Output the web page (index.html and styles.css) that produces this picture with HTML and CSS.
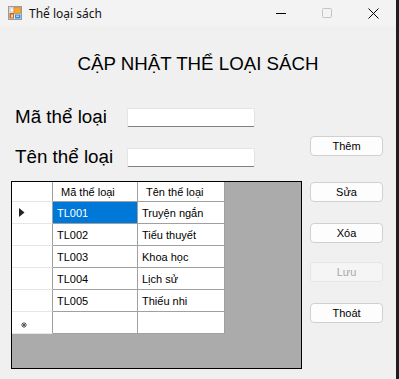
FILE: index.html
```html
<!DOCTYPE html>
<html lang="vi">
<head>
    <meta charset="UTF-8">
    <title>Thể loại sách</title>
    <link rel="stylesheet" href="styles.css">
</head>
<body>
<div class="screen">
    <div class="window">
        <!-- title bar -->
        <div class="titlebar">
            <svg class="app-icon" width="14" height="14" viewBox="0 0 14 14">
                <rect x="0.5" y="0.5" width="13" height="13" fill="#e8e8e8" stroke="#9a9a9a"/>
                <rect x="2" y="2" width="4" height="4" fill="#f7f7f7" stroke="#b0b0b0" stroke-width="0.6"/>
                <rect x="6" y="1.5" width="6.5" height="6" fill="#f5a733" stroke="#c97a14" stroke-width="0.6"/>
                <rect x="1.5" y="7" width="4.5" height="5.5" fill="#c8641c"/>
                <rect x="3" y="8.5" width="2" height="3" fill="#f8d9a8"/>
                <rect x="7" y="8.5" width="5.5" height="4" fill="#2e8de0"/>
                <rect x="8" y="9.5" width="3" height="1.5" fill="#9fd0ff"/>
            </svg>
            <span class="title">Thể loại sách</span>
            <div class="controls">
                <div class="ctl">
                    <svg width="10" height="10" viewBox="0 0 10 10"><path d="M0 5.5h10" stroke="#000" stroke-width="1"/></svg>
                </div>
                <div class="ctl">
                    <svg width="10" height="10" viewBox="0 0 10 10"><rect x="0.5" y="0.5" width="9" height="9" rx="1" fill="none" stroke="#c4c4c4"/></svg>
                </div>
                <div class="ctl">
                    <svg width="11" height="11" viewBox="0 0 11 11"><path d="M0.5 0.5l10 10M10.5 0.5l-10 10" stroke="#000" stroke-width="1"/></svg>
                </div>
            </div>
        </div>

        <h1 class="heading">CẬP NHẬT THỂ LOẠI SÁCH</h1>

        <div class="content">
            <div class="left">
                <div class="field">
                    <label for="ma">Mã thể loại</label>
                    <input type="text" id="ma">
                </div>
                <div class="field">
                    <label for="ten">Tên thể loại</label>
                    <input type="text" id="ten">
                </div>

                <div class="grid">
                    <table>
                        <tr class="head">
                            <th class="rh"></th>
                            <th class="c1">Mã thể loại</th>
                            <th class="c2">Tên thể loại</th>
                        </tr>
                        <tr>
                            <td class="rh">
                                <svg width="6" height="9" viewBox="0 0 6 9"><path d="M0 0l5.5 4.5L0 9z" fill="#222"/></svg>
                            </td>
                            <td class="selected">TL001</td>
                            <td>Truyện ngắn</td>
                        </tr>
                        <tr><td class="rh"></td><td>TL002</td><td>Tiểu thuyết</td></tr>
                        <tr><td class="rh"></td><td>TL003</td><td>Khoa học</td></tr>
                        <tr><td class="rh"></td><td>TL004</td><td>Lịch sử</td></tr>
                        <tr><td class="rh"></td><td>TL005</td><td>Thiếu nhi</td></tr>
                        <tr class="new">
                            <td class="rh">
                                <svg width="6" height="6" viewBox="0 0 6 6"><path d="M3 0v6M0 3h6M1 1l4 4M5 1l-4 4" stroke="#555" stroke-width="1"/></svg>
                            </td>
                            <td></td><td></td>
                        </tr>
                    </table>
                </div>
            </div>

            <div class="buttons">
                <button class="btn b-them">Thêm</button>
                <button class="btn b-sua">Sửa</button>
                <button class="btn b-xoa">Xóa</button>
                <button class="btn b-luu" disabled>Lưu</button>
                <button class="btn b-thoat">Thoát</button>
            </div>
        </div>
    </div>
    <div class="behind"></div>
</div>
</body>
</html>
```
FILE: styles.css
```css
/* window layout */
body {
    margin: 0;
    font-family: "Liberation Sans", Arial, sans-serif;
}
.screen {
    display: flex;
    width: 399px;
    height: 379px;
    overflow: hidden;
}
.window {
    width: 396px;
    height: 379px;
    background: #f0f0f0;
}
.behind {
    flex: 1;
    background: #1e1e1e;
}

/* title bar */
.titlebar {
    height: 26px;
    display: flex;
    align-items: center;
    background: #f3f3f3;
    padding-left: 8px;
}
.app-icon {
    margin-top: -1px;
}
.title {
    font-family: "Noto Sans", sans-serif;
    font-size: 12px;
    margin-left: 7px;
    color: #111;
}
.controls {
    margin-left: auto;
    display: flex;
    height: 26px;
}
.ctl {
    width: 46px;
    display: flex;
    align-items: center;
    justify-content: center;
}

/* heading */
.heading {
    margin: 27px 0 0;
    font-weight: normal;
    font-size: 18.7px;
    line-height: 22px;
    text-align: center;
    color: #000;
}

/* form + grid */
.content {
    display: flex;
}
.left {
    width: 291px;
    margin-left: 11px;
}
.field {
    display: flex;
    height: 22px;
    margin-top: 31px;
}
.field + .field {
    margin-top: 18px;
}
.field label {
    width: 112px;
    padding-left: 4px;
    font-size: 18.8px;
    line-height: 22px;
}
.field input {
    box-sizing: border-box;
    width: 128px;
    height: 19px;
    margin-top: 2px;
    border: 1px solid #e4e4e4;
    border-bottom-color: #7f7f7f;
    border-radius: 2px;
    background: #fff;
}

.grid {
    box-sizing: border-box;
    width: 291px;
    height: 188px;
    margin-top: 13px;
    border: 1px solid #000;
    background: #ababab;
}
table {
    border-collapse: separate;
    border-spacing: 0;
    font-size: 11px;
}
th, td {
    box-sizing: border-box;
    height: 22px;
    padding: 0 0 0 4px;
    background: #fff;
    border-right: 1px solid #a0a0a0;
    border-bottom: 1px solid #a0a0a0;
    text-align: left;
    font-weight: normal;
    white-space: nowrap;
}
.head th {
    height: 20px;
    padding-left: 8px;
}
.rh {
    width: 41px;
    padding-left: 7px;
    border-bottom-color: #e6e6e6;
}
.c1 { width: 85px; }
.c2 { width: 87px; }
td.selected {
    background: #0078d7;
    color: #fff;
}
.rh svg {
    display: block;
}
.new .rh svg {
    margin: 4px 0 0 2px;
}

/* buttons */
.buttons {
    display: flex;
    flex-direction: column;
    margin-left: 8px;
}
.btn {
    width: 73px;
    height: 20px;
    padding: 0;
    border: 1px solid #d0d0d0;
    border-radius: 4px;
    background: #fdfdfd;
    font-family: "Liberation Sans", Arial, sans-serif;
    font-size: 11px;
    color: #000;
}
.b-them { margin-top: 61px; }
.b-sua { margin-top: 26px; }
.b-xoa { margin-top: 21px; }
.b-luu {
    margin-top: 19px;
    background: #f5f5f5;
    border-color: #e5e5e5;
    color: #a8a8a8;
}
.b-thoat { margin-top: 21px; }
```
